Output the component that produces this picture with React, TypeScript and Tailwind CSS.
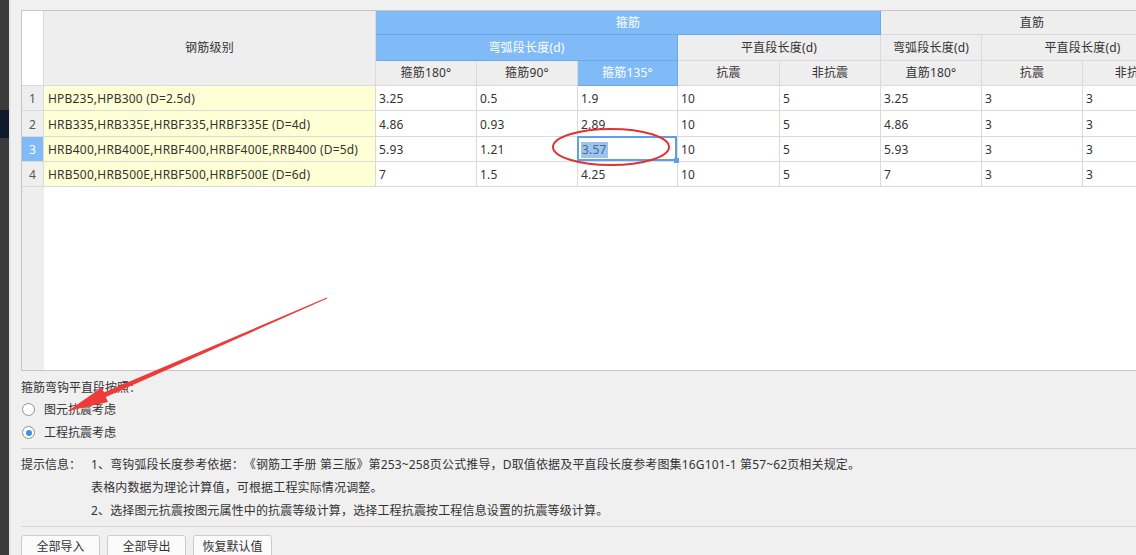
import React from "react";

const rows = [
  ["1", "HPB235,HPB300 (D=2.5d)", "3.25", "0.5", "1.9", "10", "5", "3.25", "3", "3"],
  ["2", "HRB335,HRB335E,HRBF335,HRBF335E (D=4d)", "4.86", "0.93", "2.89", "10", "5", "4.86", "3", "3"],
  ["3", "HRB400,HRB400E,HRBF400,HRBF400E,RRB400 (D=5d)", "5.93", "1.21", "3.57", "10", "5", "5.93", "3", "3"],
  ["4", "HRB500,HRB500E,HRBF500,HRBF500E (D=6d)", "7", "1.5", "4.25", "10", "5", "7", "3", "3"],
];

const G = "border-r border-b border-[#dadada] flex items-center pt-[2px]";
const B = "border-r border-b border-[#6aa8ec] bg-[#80bbf7] text-white flex items-center justify-center";
const H = "border-r border-b border-[#dadada] bg-[#eeeeee] text-[#333] flex items-center justify-center";
const BTN =
  "w-[79px] h-[28px] bg-[#fbfbfb] border border-[#cccccc] rounded-[3px] text-[#333] flex justify-center items-start pt-[3px] leading-[16px]";

export default function App() {
  return (
    <div
      className="relative w-[1136px] h-[555px] overflow-hidden bg-[#f0f0f0] text-[12px] text-[#333] flex"
      style={{ fontFamily: '"Noto Sans", "Noto Sans CJK SC", sans-serif' }}
    >
      {/* left dark strip */}
      <div className="w-[9px] h-full bg-[#3b3b3b] flex flex-col shrink-0">
        <div className="h-[110px] shrink-0" />
        <div className="h-[28px] bg-[#0f1b2b] shrink-0" />
      </div>
      <div className="w-[2px] h-full bg-[#e6e6e6] shrink-0" />

      <div className="flex-1 min-w-0 overflow-hidden pl-[10px] pt-[10px] flex flex-col">
        {/* table */}
        <div className="shrink-0 w-[1200px] h-[361px] border border-[#c6c6c6] flex flex-col bg-white">
          <div className="shrink-0 grid grid-cols-[22px_332px_101px_101px_100px_102px_101px_101px_101px_101px] grid-rows-[24px_26px_25px_25px_26px_25px_25px] leading-none tracking-[0.2px]">
            <div className="col-start-1 row-start-1 row-span-3 bg-white border-r border-b border-[#dadada]" />
            <div className={`col-start-2 row-start-1 row-span-3 ${H}`}>钢筋级别</div>
            <div className={`col-start-3 col-span-5 row-start-1 ${B}`}>箍筋</div>
            <div className={`col-start-8 col-span-3 row-start-1 ${H}`}>直筋</div>

            <div className={`col-start-3 col-span-3 row-start-2 ${B}`}>弯弧段长度(d)</div>
            <div className={`col-start-6 col-span-2 row-start-2 ${H}`}>平直段长度(d)</div>
            <div className={`col-start-8 row-start-2 ${H}`}>弯弧段长度(d)</div>
            <div className={`col-start-9 col-span-2 row-start-2 ${H}`}>平直段长度(d)</div>

            <div className={`col-start-3 row-start-3 ${H}`}>箍筋180°</div>
            <div className={`col-start-4 row-start-3 ${H}`}>箍筋90°</div>
            <div className={`col-start-5 row-start-3 ${B}`}>箍筋135°</div>
            <div className={`col-start-6 row-start-3 ${H}`}>抗震</div>
            <div className={`col-start-7 row-start-3 ${H}`}>非抗震</div>
            <div className={`col-start-8 row-start-3 ${H}`}>直筋180°</div>
            <div className={`col-start-9 row-start-3 ${H}`}>抗震</div>
            <div className={`col-start-10 row-start-3 ${H}`}>非抗震</div>

            {rows.map((r, ri) =>
              r.map((v, ci) => {
                if (ci === 0) {
                  const sel = ri === 2;
                  return (
                    <div
                      key={`${ri}-${ci}`}
                      className={`${G} justify-center ${sel ? "bg-[#80bbf7] text-white" : "bg-[#eeeeee] text-[#555]"}`}
                    >
                      {v}
                    </div>
                  );
                }
                if (ci === 1) {
                  return (
                    <div key={`${ri}-${ci}`} className={`${G} bg-[#ffffd5] pl-[4px] whitespace-nowrap`}>
                      {v}
                    </div>
                  );
                }
                if (ri === 2 && ci === 4) {
                  return (
                    <div key={`${ri}-${ci}`} className={`${G} relative pl-[3px]`}>
                      <span className="bg-[#9dc3ef] text-[#4d6888] px-[1px] py-[2px]">{v}</span>
                      <div className="absolute -top-[1px] -left-[1px] right-0 bottom-0 border-2 border-[#5e9fe8]" />
                      <div className="absolute -right-[2px] -bottom-[2px] w-[5px] h-[5px] bg-[#5e9fe8]" />
                    </div>
                  );
                }
                return (
                  <div key={`${ri}-${ci}`} className={`${G} pl-[3px]`}>
                    {v}
                  </div>
                );
              })
            )}
          </div>
          <div className="flex-1 flex">
            <div className="w-[22px] bg-[#eeeeee]" />
            <div className="flex-1 bg-white" />
          </div>
        </div>

        {/* options */}
        <div className="shrink-0 mt-[9px] h-[16px] leading-[16px]">箍筋弯钩平直段按照：</div>
        <div className="shrink-0 mt-[2px] h-[23px] flex items-center gap-[9px] pl-[1px]">
          <span className="w-[13px] h-[13px] rounded-full border border-[#8f8f8f] bg-white" />
          <span>图元抗震考虑</span>
        </div>
        <div className="shrink-0 h-[23px] flex items-center gap-[9px] pl-[1px]">
          <span className="w-[13px] h-[13px] rounded-full border border-[#8f8f8f] bg-white flex items-center justify-center">
            <span className="w-[6px] h-[6px] rounded-full bg-[#3d8fe9]" />
          </span>
          <span>工程抗震考虑</span>
        </div>
        <div className="shrink-0 mt-[4px] border-t border-[#d4d4d4] w-[1200px]" />

        {/* info */}
        <div className="shrink-0 pt-[4px] flex leading-[23px] [text-spacing-trim:space-all]">
          <div className="w-[70px] shrink-0">提示信息：</div>
          <div className="flex flex-col whitespace-nowrap tracking-[0.15px]">
            <div>1、弯钩弧段长度参考依据：《钢筋工手册 第三版》第253~258页公式推导，D取值依据及平直段长度参考图集16G101-1 第57~62页相关规定。</div>
            <div>表格内数据为理论计算值，可根据工程实际情况调整。</div>
            <div>2、选择图元抗震按图元属性中的抗震等级计算，选择工程抗震按工程信息设置的抗震等级计算。</div>
          </div>
        </div>
        <div className="shrink-0 mt-[4px] border-t border-[#d4d4d4] w-[1200px]" />

        {/* buttons */}
        <div className="shrink-0 mt-[8px] flex gap-[7px]">
          <button className={BTN}>全部导入</button>
          <button className={BTN}>全部导出</button>
          <button className={BTN}>恢复默认值</button>
        </div>
      </div>

      {/* annotations */}
      <svg className="absolute left-0 top-0 pointer-events-none" width="1136" height="555" viewBox="0 0 1136 555">
        <ellipse cx="611" cy="147" rx="58" ry="18" fill="none" stroke="#e23232" strokeWidth="2" />
        <polygon
          points="326.8,297.5 103.8,392.5 101.6,387.5 68,411 108,402.1 105.8,397.1 327.2,298.5"
          fill="#ef3a3a"
        />
      </svg>
    </div>
  );
}
